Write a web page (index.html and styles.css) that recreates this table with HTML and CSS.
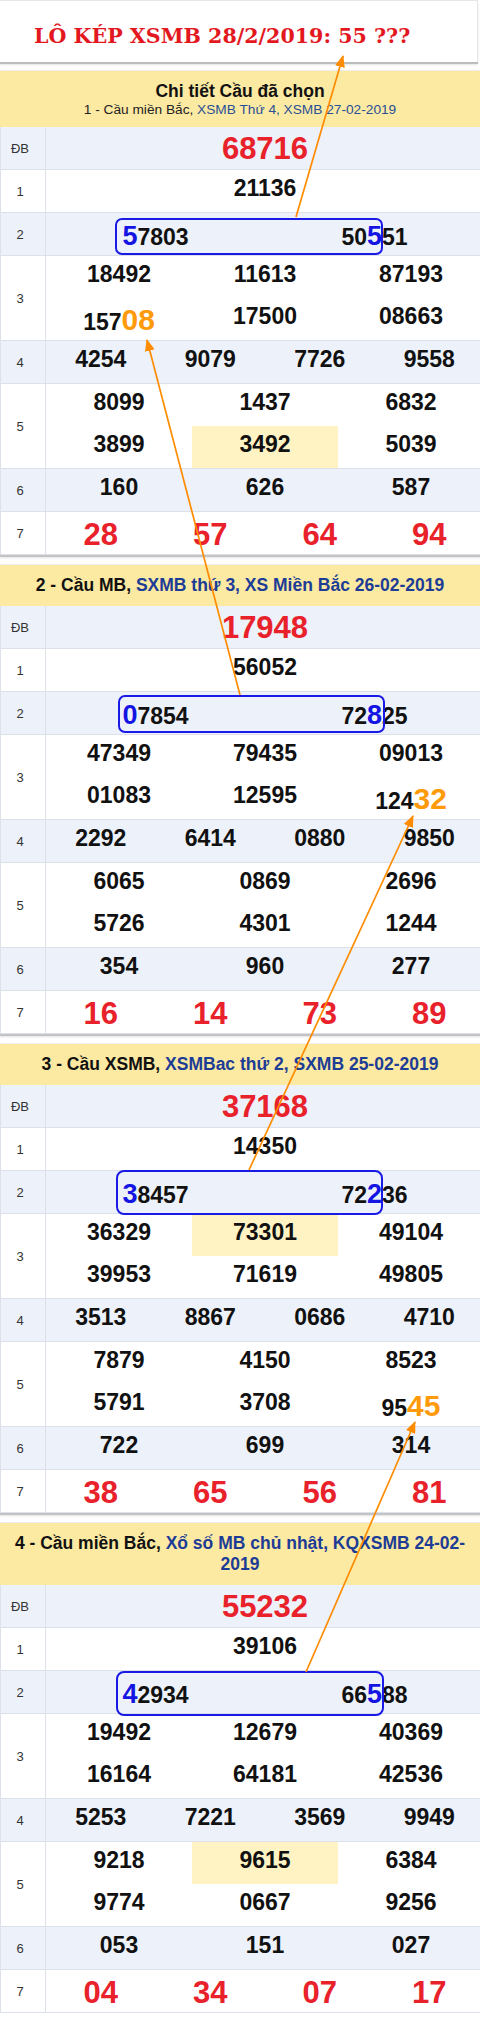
FILE: index.html
```html
<!DOCTYPE html>
<html lang="vi">
<head>
<meta charset="utf-8">
<title>Lô kép XSMB 28/2/2019</title>
<link rel="stylesheet" href="styles.css">
</head>
<body>
<div class="page">
  <div class="title">LÔ KÉP XSMB 28/2/2019: 55 ???</div>

  <section class="cau">
    <div class="cau-head cau-head--intro">
      <div class="intro-title">Chi tiết Cầu đã chọn</div>
      <div class="intro-sub">1 - Cầu miền Bắc, <span class="lnk">XSMB Thứ 4, XSMB 27-02-2019</span></div>
    </div>
    <div class="kq">
      <div class="row alt"><div class="lbl">ĐB</div><div class="cells c1"><div class="num big red db">68716</div></div></div>
      <div class="row"><div class="lbl">1</div><div class="cells c1"><div class="num">21136</div></div></div>
      <div class="row alt"><div class="lbl">2</div><div class="cells c2"><div class="num g2"><span class="bl">5</span>7803</div><div class="num g2">50<span class="bl">5</span>51</div></div></div>
      <div class="row dbl"><div class="lbl">3</div><div class="cells c3"><div class="num">18492</div><div class="num">11613</div><div class="num">87193</div><div class="num">157<span class="or">08</span></div><div class="num">17500</div><div class="num">08663</div></div></div>
      <div class="row alt"><div class="lbl">4</div><div class="cells c4"><div class="num">4254</div><div class="num">9079</div><div class="num">7726</div><div class="num">9558</div></div></div>
      <div class="row dbl"><div class="lbl">5</div><div class="cells c3"><div class="num">8099</div><div class="num">1437</div><div class="num">6832</div><div class="num">3899</div><div class="num hl">3492</div><div class="num">5039</div></div></div>
      <div class="row alt"><div class="lbl">6</div><div class="cells c3"><div class="num">160</div><div class="num">626</div><div class="num">587</div></div></div>
      <div class="row"><div class="lbl">7</div><div class="cells c4"><div class="num big red">28</div><div class="num big red">57</div><div class="num big red">64</div><div class="num big red">94</div></div></div>
    </div>
  </section>

  <section class="cau">
    <div class="cau-head">2 - Cầu MB, <span class="lnk">SXMB thứ 3, XS Miền Bắc 26-02-2019</span></div>
    <div class="kq">
      <div class="row alt"><div class="lbl">ĐB</div><div class="cells c1"><div class="num big red db">17948</div></div></div>
      <div class="row"><div class="lbl">1</div><div class="cells c1"><div class="num">56052</div></div></div>
      <div class="row alt"><div class="lbl">2</div><div class="cells c2"><div class="num g2"><span class="bl">0</span>7854</div><div class="num g2">72<span class="bl">8</span>25</div></div></div>
      <div class="row dbl"><div class="lbl">3</div><div class="cells c3"><div class="num">47349</div><div class="num">79435</div><div class="num">09013</div><div class="num">01083</div><div class="num">12595</div><div class="num">124<span class="or">32</span></div></div></div>
      <div class="row alt"><div class="lbl">4</div><div class="cells c4"><div class="num">2292</div><div class="num">6414</div><div class="num">0880</div><div class="num">9850</div></div></div>
      <div class="row dbl"><div class="lbl">5</div><div class="cells c3"><div class="num">6065</div><div class="num">0869</div><div class="num">2696</div><div class="num">5726</div><div class="num">4301</div><div class="num">1244</div></div></div>
      <div class="row alt"><div class="lbl">6</div><div class="cells c3"><div class="num">354</div><div class="num">960</div><div class="num">277</div></div></div>
      <div class="row"><div class="lbl">7</div><div class="cells c4"><div class="num big red">16</div><div class="num big red">14</div><div class="num big red">73</div><div class="num big red">89</div></div></div>
    </div>
  </section>

  <section class="cau">
    <div class="cau-head">3 - Cầu XSMB, <span class="lnk">XSMBac thứ 2, SXMB 25-02-2019</span></div>
    <div class="kq">
      <div class="row alt"><div class="lbl">ĐB</div><div class="cells c1"><div class="num big red db">37168</div></div></div>
      <div class="row"><div class="lbl">1</div><div class="cells c1"><div class="num">14350</div></div></div>
      <div class="row alt"><div class="lbl">2</div><div class="cells c2"><div class="num g2"><span class="bl">3</span>8457</div><div class="num g2">72<span class="bl">2</span>36</div></div></div>
      <div class="row dbl"><div class="lbl">3</div><div class="cells c3"><div class="num">36329</div><div class="num hl">73301</div><div class="num">49104</div><div class="num">39953</div><div class="num">71619</div><div class="num">49805</div></div></div>
      <div class="row alt"><div class="lbl">4</div><div class="cells c4"><div class="num">3513</div><div class="num">8867</div><div class="num">0686</div><div class="num">4710</div></div></div>
      <div class="row dbl"><div class="lbl">5</div><div class="cells c3"><div class="num">7879</div><div class="num">4150</div><div class="num">8523</div><div class="num">5791</div><div class="num">3708</div><div class="num">95<span class="or">45</span></div></div></div>
      <div class="row alt"><div class="lbl">6</div><div class="cells c3"><div class="num">722</div><div class="num">699</div><div class="num">314</div></div></div>
      <div class="row"><div class="lbl">7</div><div class="cells c4"><div class="num big red">38</div><div class="num big red">65</div><div class="num big red">56</div><div class="num big red">81</div></div></div>
    </div>
  </section>

  <section class="cau">
    <div class="cau-head">4 - Cầu miền Bắc, <span class="lnk">Xổ số MB chủ nhật, KQXSMB 24-02-2019</span></div>
    <div class="kq">
      <div class="row alt"><div class="lbl">ĐB</div><div class="cells c1"><div class="num big red db">55232</div></div></div>
      <div class="row"><div class="lbl">1</div><div class="cells c1"><div class="num">39106</div></div></div>
      <div class="row alt"><div class="lbl">2</div><div class="cells c2"><div class="num g2"><span class="bl">4</span>2934</div><div class="num g2">66<span class="bl">5</span>88</div></div></div>
      <div class="row dbl"><div class="lbl">3</div><div class="cells c3"><div class="num">19492</div><div class="num">12679</div><div class="num">40369</div><div class="num">16164</div><div class="num">64181</div><div class="num">42536</div></div></div>
      <div class="row alt"><div class="lbl">4</div><div class="cells c4"><div class="num">5253</div><div class="num">7221</div><div class="num">3569</div><div class="num">9949</div></div></div>
      <div class="row dbl"><div class="lbl">5</div><div class="cells c3"><div class="num">9218</div><div class="num hl">9615</div><div class="num">6384</div><div class="num">9774</div><div class="num">0667</div><div class="num">9256</div></div></div>
      <div class="row alt"><div class="lbl">6</div><div class="cells c3"><div class="num">053</div><div class="num">151</div><div class="num">027</div></div></div>
      <div class="row"><div class="lbl">7</div><div class="cells c4"><div class="num big red">04</div><div class="num big red">34</div><div class="num big red">07</div><div class="num big red">17</div></div></div>
    </div>
  </section>

  <svg class="marks" width="480" height="2020" viewBox="0 0 480 2020" aria-hidden="true">
    <defs>
      <marker id="ah" markerUnits="userSpaceOnUse" markerWidth="12" markerHeight="10" refX="11" refY="5" orient="auto">
        <path d="M0,0 L12,5 L0,10 Z" fill="#ff8c00"/>
      </marker>
    </defs>
    <g class="boxes">
      <rect x="116" y="219" width="266" height="35" rx="6"/>
      <rect x="119" y="696" width="265" height="36" rx="6"/>
      <rect x="117" y="1171" width="265" height="43" rx="7"/>
      <rect x="117" y="1672" width="266" height="43" rx="7"/>
    </g>
    <g class="arrows">
      <line x1="296" y1="217" x2="343" y2="56" marker-end="url(#ah)"/>
      <line x1="240" y1="695" x2="147" y2="340" marker-end="url(#ah)"/>
      <line x1="249" y1="1170" x2="413" y2="816" marker-end="url(#ah)"/>
      <line x1="306" y1="1672" x2="415" y2="1422" marker-end="url(#ah)"/>
    </g>
  </svg>
</div>
</body>
</html>
```

FILE: styles.css
```css
html, body {
  margin: 0;
  padding: 0;
  background: #ffffff;
}

.page {
  position: relative;
  width: 480px;
  overflow: hidden;
  font-family: "Liberation Sans", Arial, sans-serif;
  color: #111;
}

.title {
  box-sizing: border-box;
  height: 62px;
  width: 478px;
  border-top: 1px solid #e6e6e6;
  border-right: 1px solid #e6e6e6;
  padding: 22px 0 0 34px;
  font-family: "DejaVu Serif", "Liberation Serif", serif;
  font-weight: bold;
  font-size: 20.6px;
  line-height: 26px;
  letter-spacing: 0;
  white-space: nowrap;
  color: #e3181f;
  box-shadow: 0 2px 0 #bdbdbd, 0 3px 2px #e4e4e4;
}

.cau {
  margin-top: 9px;
}

.page > .title + .cau {
  margin-top: 8px;
}

.cau-head {
  box-sizing: border-box;
  border-top: 1px solid #ececec;
  background: #fce9a2;
  padding: 10px 10px;
  font-size: 17.5px;
  line-height: 21px;
  font-weight: bold;
  text-align: center;
  color: #111;
}

.cau-head .lnk {
  color: #1d3c96;
}

.cau-head--intro {
  padding: 10px 10px 9px;
}

.intro-title {
  font-size: 17.5px;
  line-height: 20px;
  font-weight: bold;
}

.intro-sub {
  font-size: 13.7px;
  line-height: 17px;
  font-weight: normal;
  color: #222;
}

.intro-sub .lnk {
  color: #2a4f96;
}

.kq {
  width: 484px;
  border-left: 1px solid #dde2ea;
  box-shadow: 0 2px 0 #c3c3c3, 0 3px 2px #e2e2e2;
}

.row {
  display: flex;
  height: 43px;
  box-sizing: border-box;
  border-bottom: 1px solid #dce1e9;
  background: #ffffff;
}

.row.alt {
  background: #edf1f9;
}

.row.dbl {
  height: 85px;
}

.lbl {
  box-sizing: border-box;
  width: 45px;
  flex: none;
  border-right: 1px solid #dce1e9;
  padding-right: 6px;
  display: flex;
  align-items: center;
  justify-content: center;
  font-size: 13px;
  color: #333;
}

.cells {
  width: 438px;
  display: grid;
  grid-auto-rows: 42px;
}

.c1 { grid-template-columns: 1fr; }
.c2 { grid-template-columns: repeat(2, 1fr); }
.c3 { grid-template-columns: repeat(3, 1fr); }
.c4 { grid-template-columns: repeat(4, 1fr); }

.num {
  box-sizing: border-box;
  height: 42px;
  padding-top: 5px;
  text-align: center;
  font-size: 23px;
  font-weight: bold;
  color: #111;
  white-space: nowrap;
}

.num.g2 {
  padding-top: 8px;
}

.num.big {
  font-size: 31px;
}

.num.db {
  padding-top: 4px;
}

.num.red {
  color: #e8212b;
}

.num.hl {
  background: #fff3c4;
}

.bl {
  font-size: 27px;
  color: #1515e3;
}

.or {
  font-size: 30px;
  color: #ff9a0a;
}

.marks {
  position: absolute;
  left: 0;
  top: 0;
  pointer-events: none;
}

.boxes rect {
  fill: none;
  stroke: #1a1ae6;
  stroke-width: 2;
}

.arrows line {
  stroke: #ff8c00;
  stroke-width: 1.7;
}
```
